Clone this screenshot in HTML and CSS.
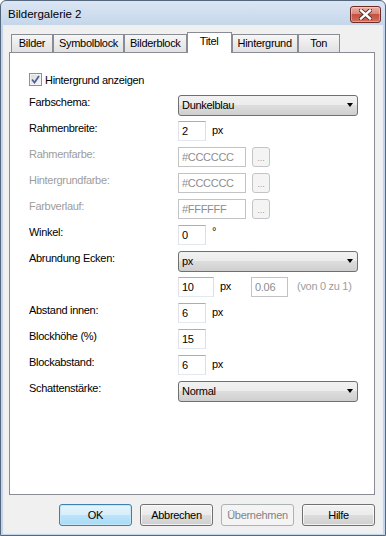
FILE: index.html
```html
<!DOCTYPE html>
<html lang="de">
<head>
  <meta charset="UTF-8" />
  <title>Bildergalerie 2</title>
  <link rel="stylesheet" href="styles.css">
</head>
<body>
  <div class="window">
    <div class="titlebar">
      <span class="title">Bildergalerie 2</span>
      <span class="close">
        <svg width="13" height="11" viewBox="0 0 13 11">
          <path d="M2 1.5 L11 9.5 M11 1.5 L2 9.5" stroke="#4a2a26" stroke-width="4.2" stroke-linecap="square" fill="none"/>
          <path d="M2 1.5 L11 9.5 M11 1.5 L2 9.5" stroke="#fff" stroke-width="2.4" stroke-linecap="square" fill="none"/>
        </svg>
      </span>
    </div>

    <div class="client">
      <div class="tabs">
        <span class="tab">Bilder</span>
        <span class="tab">Symbolblock</span>
        <span class="tab">Bilderblock</span>
        <span class="tab active">Titel</span>
        <span class="tab">Hintergrund</span>
        <span class="tab">Ton</span>
      </div>

      <div class="panel">
        <label class="check">
          <span class="box">
            <svg width="9" height="9" viewBox="0 0 9 9">
              <path d="M1 4.5 L3.5 7.5 L8 1" stroke="#4b5f96" stroke-width="1.7" fill="none"/>
            </svg>
          </span>
          Hintergrund anzeigen
        </label>

        <div class="form">
          <span class="lbl">Farbschema:</span>
          <div class="field"><div class="combo">Dunkelblau<i class="arrow"></i></div></div>

          <span class="lbl">Rahmenbreite:</span>
          <div class="field"><span class="edit num">2</span><span class="unit">px</span></div>

          <span class="lbl off">Rahmenfarbe:</span>
          <div class="field"><span class="edit hex off">#CCCCCC</span><span class="dots">...</span></div>

          <span class="lbl off">Hintergrundfarbe:</span>
          <div class="field"><span class="edit hex off">#CCCCCC</span><span class="dots">...</span></div>

          <span class="lbl off">Farbverlauf:</span>
          <div class="field"><span class="edit hex off">#FFFFFF</span><span class="dots">...</span></div>

          <span class="lbl">Winkel:</span>
          <div class="field"><span class="edit num">0</span><span class="unit deg">°</span></div>

          <span class="lbl">Abrundung Ecken:</span>
          <div class="field"><div class="combo">px<i class="arrow"></i></div></div>

          <span class="lbl"></span>
          <div class="field">
            <span class="edit mid">10</span><span class="unit">px</span>
            <span class="edit ratio off">0.06</span><span class="hint">(von 0 zu 1)</span>
          </div>

          <span class="lbl">Abstand innen:</span>
          <div class="field"><span class="edit num">6</span><span class="unit">px</span></div>

          <span class="lbl">Blockhöhe (%)</span>
          <div class="field"><span class="edit num">15</span></div>

          <span class="lbl">Blockabstand:</span>
          <div class="field"><span class="edit num">6</span><span class="unit">px</span></div>

          <span class="lbl">Schattenstärke:</span>
          <div class="field"><div class="combo">Normal<i class="arrow"></i></div></div>
        </div>
      </div>

      <div class="buttons">
        <button class="btn default">OK</button>
        <button class="btn">Abbrechen</button>
        <button class="btn" disabled>Übernehmen</button>
        <button class="btn">Hilfe</button>
      </div>
    </div>
  </div>
</body>
</html>
```

FILE: styles.css
```css
*{box-sizing:border-box;}
body{
  margin:0;
  font-family:"Liberation Sans",Arial,sans-serif;
  font-size:11px;letter-spacing:-.3px;color:#000;background:#fff;
}
.window{
  width:386px;height:536px;display:flex;flex-direction:column;
  border:1px solid #55677d;border-radius:6px 6px 0 0;
  background:linear-gradient(#dbe6f4,#c4d5ea 26px,#c4d5ea);
  padding:0 3px 2px;
}
.titlebar{
  height:25px;display:flex;align-items:center;justify-content:space-between;
  padding-left:4px;
}
.title{font-size:11.5px;letter-spacing:0;}
.close{
  width:31px;height:17px;margin-right:1px;margin-top:1px;
  display:flex;align-items:center;justify-content:center;
  border:1px solid #6c2b25;border-radius:3px;
  background:linear-gradient(#eab0a6,#d8897c 45%,#c45141 50%,#d16d5d);
  box-shadow:inset 0 0 0 1px rgba(255,255,255,.35);
}
.client{
  flex:1;display:flex;flex-direction:column;
  background:#f0f0f0;padding:6px 7px 7px 5px;
  box-shadow:0 0 0 1px rgba(255,255,255,.6);
}

/* ---------- Tabs ---------- */
.tabs{
  display:flex;align-items:flex-end;height:20px;padding-left:2px;
  position:relative;z-index:1;
}
.tab{
  height:18px;min-width:42px;padding:0 5px;
  border:1px solid #898c95;border-bottom:none;
  background:linear-gradient(#f6f6f6,#e1e1e1);
  line-height:17px;text-align:center;white-space:nowrap;
}
.tab.active{
  height:21px;min-width:45px;margin-bottom:-1px;background:#fff;
  line-height:16px;
}
.panel{
  flex:1;background:#fff;border:1px solid #898c95;
  padding:20px 0 0 19px;
}

/* ---------- Formular ---------- */
.check{display:flex;align-items:center;gap:3px;height:13px;margin-bottom:9px;}
.box{
  width:13px;height:13px;display:flex;align-items:center;justify-content:center;
  border:1px solid #8e8f8f;
  background:linear-gradient(135deg,#d9d9d9,#f8f8f8);
  box-shadow:inset 0 0 0 1px #f4f4f4;
}
.form{
  display:grid;grid-template-columns:149px 1fr;
  grid-auto-rows:20px;row-gap:6px;
}
.lbl{padding-top:1px;line-height:13px;}
.lbl.off{color:#9d9d9d;}
.field{display:flex;align-items:center;gap:6px;}
.edit{
  height:20px;padding:0 3px;line-height:18px;background:#fff;
  border:1px solid;border-color:#abadb3 #dbdfe6 #e3e9ef #e2e3ea;
  white-space:nowrap;
}
.edit.off{color:#8d8d8d;border-color:#c3c3c3;}
.num{width:28px;}
.hex{width:68px;}
.mid{width:36px;}
.ratio{width:37px;margin-left:14px;}
.unit{padding-bottom:3px;}
.deg{padding-bottom:8px;}
.hint{color:#9d9d9d;margin-left:3px;padding-bottom:2px;}
.dots{
  width:18px;height:20px;border:1px solid #c2c4c8;border-radius:3px;
  background:#f4f4f4;color:#9d9d9d;font-size:9px;letter-spacing:0;
  display:flex;align-items:flex-end;justify-content:center;padding-bottom:3px;
}
.combo{
  width:180px;height:21px;display:flex;align-items:center;justify-content:space-between;
  padding:0 3px;
  border:1px solid #707070;border-radius:3px;
  background:linear-gradient(#f2f2f2,#ebebeb 50%,#dddddd 50%,#cfcfcf);
}
.arrow{
  width:0;height:0;margin-right:1px;
  border-top:4px solid #000;border-left:3.5px solid transparent;border-right:3.5px solid transparent;
}

/* ---------- Buttons ---------- */
.buttons{display:flex;justify-content:flex-end;gap:8px;margin-top:9px;}
.btn{
  width:73px;height:22px;padding:0;
  font:inherit;letter-spacing:inherit;color:#000;
  border:1px solid #707070;border-radius:3px;
  background:linear-gradient(#f2f2f2,#ebebeb 50%,#dddddd 50%,#cfcfcf);
  box-shadow:inset 0 0 0 1px rgba(255,255,255,.7);
}
.btn.default{
  border-color:#3c7fb1;
  background:linear-gradient(#e5f4fc,#d7eefb 50%,#bce4fa 50%,#a9daf6);
  box-shadow:inset 0 0 0 1px #c5e6f9;
}
.btn:disabled{border-color:#adb2b5;background:#f4f4f4;color:#838383;box-shadow:none;}
```
